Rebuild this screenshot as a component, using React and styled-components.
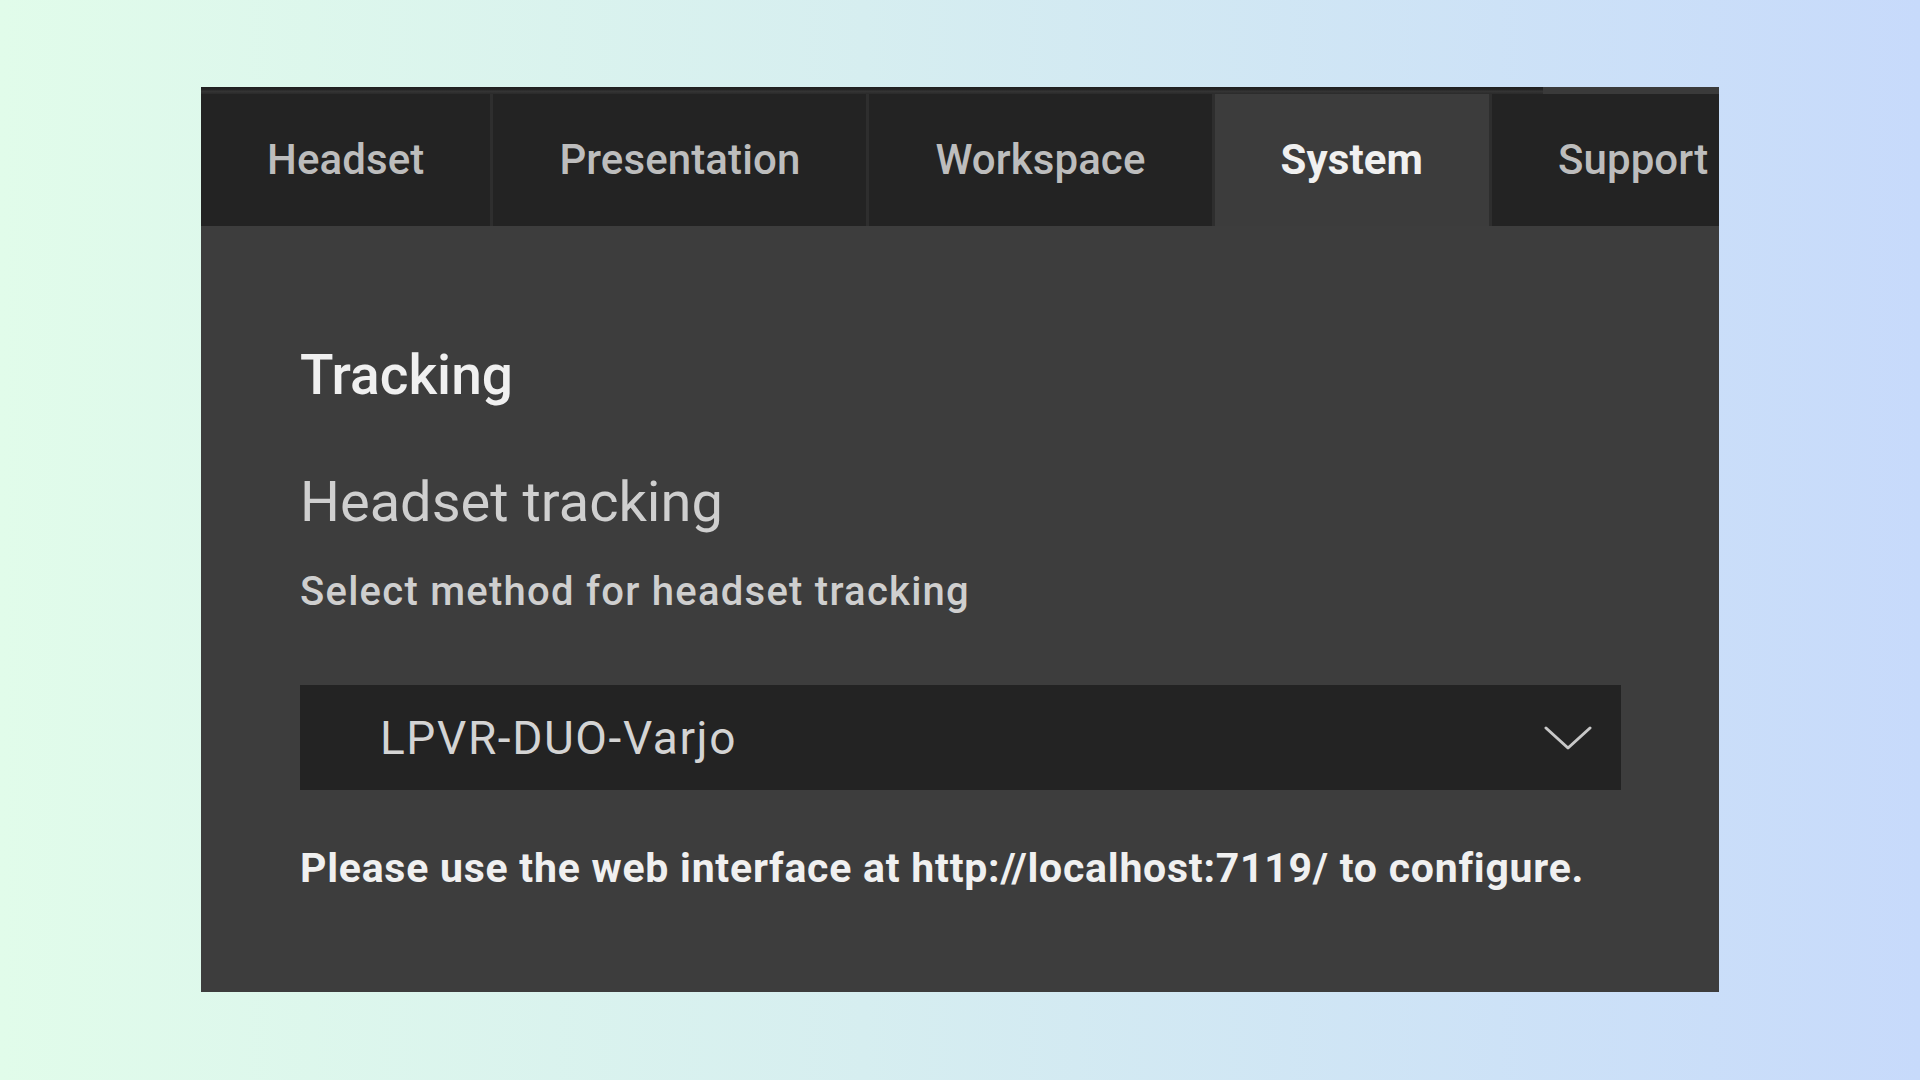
import React, { useState } from "react";
import styled, { createGlobalStyle } from "styled-components";

const GlobalStyle = createGlobalStyle`
  html, body {
    margin: 0;
    padding: 0;
  }
  body {
    font-family: Roboto, "Liberation Sans", sans-serif;
    background: linear-gradient(90deg, #e1fcea 0%, #d6eef0 45%, #c7dafb 100%);
    min-height: 100vh;
  }
`;

const Page = styled.div`
  min-height: 100vh;
  padding: 87px 0 0 201px;
  box-sizing: border-box;
`;

const Panel = styled.div`
  width: 1518px;
  height: 905px;
  background: #3d3d3d;
  overflow: hidden;
  display: flex;
  flex-direction: column;
`;

const ScrollStrip = styled.div`
  height: 7px;
  display: flex;
  background: #3a3a3a;
  flex-shrink: 0;
`;

const ScrollThumb = styled.div`
  width: 1342px;
  background: linear-gradient(180deg, #1f1f1f 0%, #262626 40%, #353535 60%, #2a2a2a 100%);
`;

const TabBar = styled.div`
  display: flex;
  height: 132px;
  background: #232323;
  flex-shrink: 0;
`;

const Tab = styled.button`
  flex-shrink: 0;
  height: 100%;
  padding: 0 66px;
  border: none;
  border-left: ${p => (p.$first ? "none" : "3px solid #2e2e2e")};
  background: ${p => (p.$active ? "#3c3c3c" : "#232323")};
  color: ${p => (p.$active ? "#f0f0f0" : "#bdbdbd")};
  font-family: Roboto, "Liberation Sans", sans-serif;
  font-size: 42px;
  font-weight: ${p => (p.$active ? 700 : 500)};
  letter-spacing: 0.1px;
  line-height: 1;
  cursor: pointer;
  white-space: nowrap;
`;

const Content = styled.div`
  padding: 122px 99px 0 99px;
  display: flex;
  flex-direction: column;
`;

const Title = styled.h1`
  margin: 0;
  font-size: 55px;
  line-height: 1;
  font-weight: 500;
  color: #f0f0f0;
`;

const Subtitle = styled.h2`
  margin: 71px 0 0;
  font-size: 56px;
  line-height: 1;
  font-weight: 400;
  color: #cfcfcf;
`;

const Description = styled.p`
  margin: 42px 0 0;
  font-size: 40px;
  line-height: 1;
  font-weight: 500;
  letter-spacing: 1.25px;
  color: #cfcfcf;
`;

const SelectBox = styled.div`
  margin-top: 73px;
  width: 1321px;
  height: 105px;
  background: #232323;
  display: flex;
  align-items: center;
  justify-content: space-between;
  padding: 0 29px 0 80px;
  box-sizing: border-box;
  cursor: pointer;
`;

const SelectValue = styled.span`
  font-size: 46px;
  line-height: 1;
  letter-spacing: 1.6px;
  color: #d4d4d4;
`;

const Note = styled.p`
  margin: 58px 0 0;
  font-size: 41px;
  line-height: 1;
  font-weight: 700;
  letter-spacing: 0.75px;
  color: #f0f0f0;
`;

const Chevron = () => (
  <svg width="48" height="26" viewBox="0 0 48 26" fill="none">
    <path
      d="M2 3 L24 23 L46 3"
      stroke="#c8c8c8"
      strokeWidth="3"
      strokeLinecap="round"
      strokeLinejoin="round"
    />
  </svg>
);

const tabs = ["Headset", "Presentation", "Workspace", "System", "Support"];

const App = () => {
  const [active, setActive] = useState("System");

  return (
    <>
      <GlobalStyle />
      <Page>
        <Panel>
          <ScrollStrip>
            <ScrollThumb />
          </ScrollStrip>
          <TabBar>
            {tabs.map((t, i) => (
              <Tab
                key={t}
                $first={i === 0}
                $active={t === active}
                onClick={() => setActive(t)}
              >
                {t}
              </Tab>
            ))}
          </TabBar>
          <Content>
            <Title>Tracking</Title>
            <Subtitle>Headset tracking</Subtitle>
            <Description>Select method for headset tracking</Description>
            <SelectBox>
              <SelectValue>LPVR-DUO-Varjo</SelectValue>
              <Chevron />
            </SelectBox>
            <Note>
              Please use the web interface at http://localhost:7119/ to
              configure.
            </Note>
          </Content>
        </Panel>
      </Page>
    </>
  );
};

export default App;
